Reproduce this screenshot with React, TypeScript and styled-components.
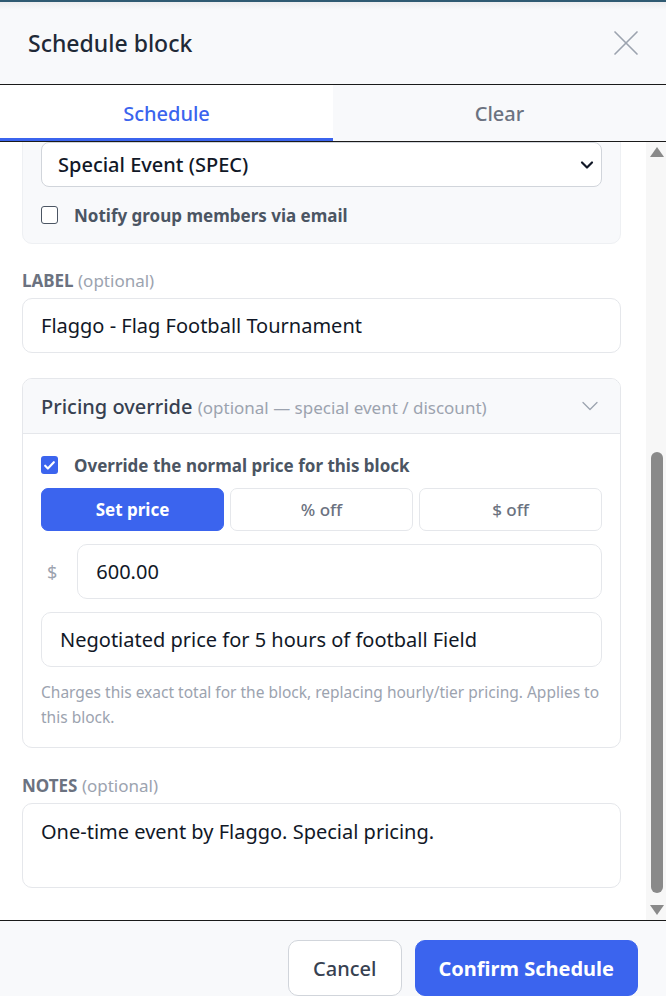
import React, { useLayoutEffect, useRef, useState } from "react";
import styled, { createGlobalStyle } from "styled-components";
import { X, ChevronDown } from "lucide-react";

const GlobalStyle = createGlobalStyle`
  html, body, #root {
    margin: 0;
    height: 100%;
  }
  body {
    font-family: "Segoe UI", "Noto Sans", "Open Sans", sans-serif;
    background: #ffffff;
    color: #111827;
  }
  * {
    box-sizing: border-box;
  }
`;

const Modal = styled.div`
  display: flex;
  flex-direction: column;
  height: 100vh;
  background: #ffffff;
  border-top: 2px solid #2f5a72;
`;

const Header = styled.header`
  display: flex;
  flex-shrink: 0;
  align-items: center;
  justify-content: space-between;
  height: 83px;
  padding: 0 18px 0 28px;
  background: linear-gradient(#ececee, #f8f9fb 8px);
  border-bottom: 1px solid #1a1a1a;
`;

const Title = styled.h2`
  margin: 0;
  font-size: 23px;
  font-weight: 500;
  color: #1f2937;
`;

const CloseButton = styled.button`
  display: flex;
  padding: 0;
  border: none;
  background: none;
  color: #9ca3af;
  cursor: pointer;
`;

const Tabs = styled.nav`
  display: grid;
  flex-shrink: 0;
  grid-template-columns: 1fr 1fr;
  height: 57px;
  border-bottom: 1px solid #1a1a1a;
`;

const Tab = styled.button<{ $active?: boolean }>`
  border: none;
  font-family: inherit;
  font-size: 20px;
  font-weight: 500;
  color: ${({ $active }) => ($active ? "#3b64ee" : "#6b7280")};
  background: ${({ $active }) => ($active ? "#ffffff" : "#f8f9fb")};
  box-shadow: ${({ $active }) => ($active ? "inset 0 -3px 0 #3b64ee" : "none")};
  cursor: pointer;
`;

const ScrollArea = styled.div`
  display: flex;
  flex: 1;
  min-height: 0;
`;

const Body = styled.div`
  flex: 1;
  min-height: 0;
  overflow-y: auto;
  scrollbar-width: none;
  padding: 22px 25px 32px 22px;
  display: flex;
  flex-direction: column;
  gap: 25px;

  & > * {
    flex-shrink: 0;
  }
`;

const Rail = styled.div`
  display: flex;
  flex-direction: column;
  width: 20px;
  flex-shrink: 0;
  background: #f7f7f7;
`;

const RailButton = styled.div`
  display: flex;
  align-items: center;
  justify-content: center;
  height: 20px;
  padding-left: 2px;
`;

const Arrow = styled.span<{ $down?: boolean }>`
  width: 0;
  height: 0;
  border-left: 7px solid transparent;
  border-right: 7px solid transparent;
  ${({ $down }) =>
    $down ? "border-top: 10px solid #8a8a8a;" : "border-bottom: 10px solid #8a8a8a;"}
`;

const Track = styled.div`
  flex: 1;
  min-height: 0;
`;

const Thumb = styled.div`
  width: 12px;
  margin-left: 5px;
  border-radius: 6px;
  background: #8a8a8a;
`;

const Panel = styled.section`
  display: flex;
  flex-direction: column;
  gap: 18px;
  padding: 18px;
  background: #f8f9fb;
  border: 1px solid #eef0f3;
  border-radius: 10px;
`;

const Field = styled.div<{ $spaced?: boolean }>`
  display: flex;
  flex-direction: column;
  gap: 5px;
  margin-top: ${({ $spaced }) => ($spaced ? "1px" : "0")};
`;

const Label = styled.label`
  font-size: 17px;
  line-height: 24px;
  font-weight: 700;
  color: #6b7280;
  text-transform: uppercase;

  span {
    font-weight: 400;
    text-transform: none;
    color: #9ca3af;
  }
`;

const Input = styled.input`
  width: 100%;
  height: 55px;
  padding: 0 18px;
  font-family: inherit;
  font-size: 20px;
  color: #111827;
  background: #ffffff;
  border: 1px solid #e5e7eb;
  border-radius: 10px;
  outline: none;
`;

const TextArea = styled.textarea`
  width: 100%;
  height: 85px;
  padding: 14px 18px;
  font-family: inherit;
  font-size: 20px;
  color: #111827;
  background: #ffffff;
  border: 1px solid #e5e7eb;
  border-radius: 10px;
  resize: none;
  outline: none;
`;

const SelectWrap = styled.div`
  display: flex;
  align-items: center;
  justify-content: space-between;
  height: 45px;
  padding: 0 4px 0 16px;
  background: #ffffff;
  border: 1px solid #d1d5db;
  border-radius: 8px;
  font-size: 20px;
  font-weight: 500;
  color: #111827;
`;

const Hint = styled.div`
  font-size: 15px;
  color: #9ca3af;
`;

const CheckRow = styled.label`
  display: flex;
  align-items: center;
  gap: 16px;
  height: 20px;
  font-size: 17px;
  font-weight: 700;
  color: #4b5563;
`;

const Box = styled.span<{ $checked?: boolean }>`
  display: flex;
  align-items: center;
  justify-content: center;
  width: 17px;
  height: 18px;
  border-radius: 3px;
  border: ${({ $checked }) => ($checked ? "none" : "1.5px solid #4b5563")};
  background: ${({ $checked }) => ($checked ? "#3b64ee" : "#ffffff")};
`;

const PricingCard = styled.section`
  border: 1px solid #e5e7eb;
  border-radius: 10px;
  background: #ffffff;
  overflow: hidden;
`;

const PricingHeader = styled.div`
  display: flex;
  align-items: center;
  justify-content: space-between;
  height: 55px;
  padding: 0 16px 0 18px;
  background: #f8f9fb;
  border-bottom: 1px solid #e5e7eb;
`;

const PricingTitle = styled.div`
  font-size: 20px;
  font-weight: 500;
  color: #374151;

  span {
    font-size: 17px;
    font-weight: 400;
    color: #9ca3af;
  }
`;

const PricingBody = styled.div`
  display: flex;
  flex-direction: column;
  gap: 13px;
  padding: 21px 18px 17px;
`;

const Segmented = styled.div`
  display: grid;
  grid-template-columns: repeat(3, 1fr);
  gap: 6px;
`;

const SegButton = styled.button<{ $active?: boolean }>`
  height: 43px;
  font-family: inherit;
  font-size: 17px;
  font-weight: ${({ $active }) => ($active ? 700 : 500)};
  color: ${({ $active }) => ($active ? "#ffffff" : "#6b7280")};
  background: ${({ $active }) => ($active ? "#3b64ee" : "#ffffff")};
  border: 1px solid ${({ $active }) => ($active ? "#3b64ee" : "#e5e7eb")};
  border-radius: 7px;
  cursor: pointer;
`;

const AmountRow = styled.div`
  display: flex;
  align-items: center;
  gap: 20px;
  padding-left: 6px;
`;

const Currency = styled.span`
  font-size: 18px;
  color: #9ca3af;
`;

const Help = styled.p`
  margin: 0;
  font-size: 15.5px;
  line-height: 25px;
  color: #9ca3af;
`;

const Footer = styled.footer`
  display: flex;
  flex-shrink: 0;
  justify-content: flex-end;
  gap: 13px;
  padding: 19px 28px 0;
  height: 76px;
  background: #f8f9fb;
  border-top: 1px solid #1a1a1a;
`;

const Button = styled.button<{ $primary?: boolean }>`
  height: 56px;
  padding: 0 ${({ $primary }) => ($primary ? "23px" : "24px")};
  font-family: inherit;
  font-size: 20px;
  font-weight: ${({ $primary }) => ($primary ? 700 : 500)};
  color: ${({ $primary }) => ($primary ? "#ffffff" : "#374151")};
  background: ${({ $primary }) => ($primary ? "#3b64ee" : "#ffffff")};
  border: 1px solid ${({ $primary }) => ($primary ? "#3b64ee" : "#d1d5db")};
  border-radius: 10px;
  cursor: pointer;
`;

const Check = () => (
  <svg width="13" height="13" viewBox="0 0 24 24" fill="none" stroke="#fff" strokeWidth="4" strokeLinecap="round" strokeLinejoin="round">
    <path d="M4 12.5l5 5L20 6" />
  </svg>
);

export default function App() {
  const bodyRef = useRef<HTMLDivElement>(null);
  const trackRef = useRef<HTMLDivElement>(null);
  const [thumb, setThumb] = useState({ top: 0, height: 0 });
  const [label, setLabel] = useState("Flaggo - Flag Football Tournament");
  const [amount, setAmount] = useState("600.00");
  const [reason, setReason] = useState("Negotiated price for 5 hours of football Field");
  const [notes, setNotes] = useState("One-time event by Flaggo. Special pricing.");

  const measure = () => {
    const el = bodyRef.current;
    const track = trackRef.current;
    if (!el || !track) return;
    const h = track.clientHeight;
    setThumb({
      top: (el.scrollTop / el.scrollHeight) * h,
      height: (el.clientHeight / el.scrollHeight) * h - 7,
    });
  };

  useLayoutEffect(() => {
    if (bodyRef.current) bodyRef.current.scrollTop = bodyRef.current.scrollHeight;
    measure();
  }, []);

  return (
    <>
      <GlobalStyle />
      <Modal>
        <Header>
          <Title>Schedule block</Title>
          <CloseButton aria-label="Close">
            <X size={44} strokeWidth={0.9} />
          </CloseButton>
        </Header>
        <Tabs>
          <Tab $active>Schedule</Tab>
          <Tab>Clear</Tab>
        </Tabs>
        <ScrollArea>
          <Body ref={bodyRef} onScroll={measure}>
            <Field>
              <Label>Date</Label>
              <Input readOnly value="Saturday, June 14, 2025" />
            </Field>
            <Field>
              <Label>Time</Label>
              <Input readOnly value="9:00 AM – 2:00 PM" />
              <Hint>5 hours</Hint>
            </Field>
            <Field>
              <Label>Repeat</Label>
              <SelectWrap>
                Does not repeat
                <ChevronDown size={20} strokeWidth={2.6} />
              </SelectWrap>
            </Field>
            <Panel>
              <Field>
                <Label>Field</Label>
                <SelectWrap>
                  Football Field
                  <ChevronDown size={20} strokeWidth={2.6} />
                </SelectWrap>
              </Field>
              <Field>
                <Label>Group</Label>
                <SelectWrap>
                  Special Event (SPEC)
                  <ChevronDown size={20} strokeWidth={2.6} />
                </SelectWrap>
              </Field>
              <CheckRow>
                <Box />
                Notify group members via email
              </CheckRow>
            </Panel>
            <Field>
              <Label>
                Label <span>(optional)</span>
              </Label>
              <Input value={label} onChange={(e) => setLabel(e.target.value)} />
            </Field>
            <PricingCard>
              <PricingHeader>
                <PricingTitle>
                  Pricing override <span>(optional — special event / discount)</span>
                </PricingTitle>
                <ChevronDown size={28} strokeWidth={1.1} color="#9ca3af" />
              </PricingHeader>
              <PricingBody>
                <CheckRow>
                  <Box $checked>
                    <Check />
                  </Box>
                  Override the normal price for this block
                </CheckRow>
                <Segmented>
                  <SegButton $active>Set price</SegButton>
                  <SegButton>% off</SegButton>
                  <SegButton>$ off</SegButton>
                </Segmented>
                <AmountRow>
                  <Currency>$</Currency>
                  <Input value={amount} onChange={(e) => setAmount(e.target.value)} />
                </AmountRow>
                <Input value={reason} onChange={(e) => setReason(e.target.value)} />
                <Help>
                  Charges this exact total for the block, replacing hourly/tier pricing. Applies to
                  this block.
                </Help>
              </PricingBody>
            </PricingCard>
            <Field $spaced>
              <Label>
                Notes <span>(optional)</span>
              </Label>
              <TextArea value={notes} onChange={(e) => setNotes(e.target.value)} />
            </Field>
          </Body>
          <Rail>
            <RailButton>
              <Arrow />
            </RailButton>
            <Track ref={trackRef}>
              <Thumb style={{ marginTop: thumb.top, height: thumb.height }} />
            </Track>
            <RailButton>
              <Arrow $down />
            </RailButton>
          </Rail>
        </ScrollArea>
        <Footer>
          <Button>Cancel</Button>
          <Button $primary>Confirm Schedule</Button>
        </Footer>
      </Modal>
    </>
  );
}
